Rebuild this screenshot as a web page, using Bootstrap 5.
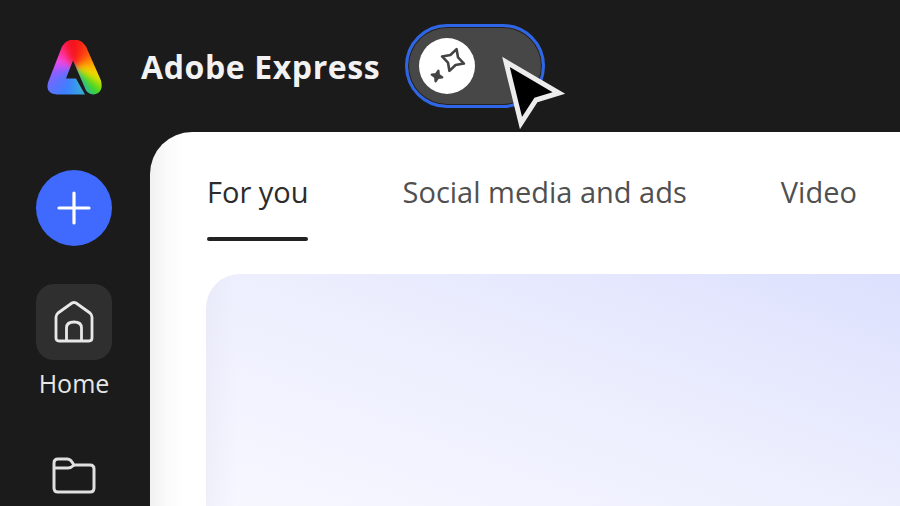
<!DOCTYPE html>
<html><head>
  <title>Adobe Express</title>
  <link rel="stylesheet" href="https://cdn.jsdelivr.net/npm/bootstrap@5.3.0/dist/css/bootstrap.min.css">
  <style>
    html, body { height: 506px; overflow: hidden; }
    body { background: #1b1b1b; font-family: "Open Sans", "Noto Sans", sans-serif; }
    .app-top { height: 132px; padding-left: 47px; }
    .logo-a {
      width: 55px; height: 55px; margin-top: 2px; overflow: hidden;
      clip-path: path("M15 7Q19 0 27 0Q35 0 39 7L54 41Q57 53 47 55Q42 55 39 51L26 21L19 39L29 39L38 55L10 55Q-2 54 1 43Z");
    }
    .logo-fill {
      width: 95px; height: 95px; margin: -20px; filter: blur(3px);
      background: conic-gradient(from 0deg at 50% 50%, #f5101c 0deg, #ff4a10 40deg, #ffb400 85deg, #f5e000 112deg, #30d820 138deg, #3aa8e0 160deg, #3a80ff 200deg, #6a6cff 238deg, #a058ff 262deg, #f848e8 295deg, #ff2a80 325deg, #f5101c 350deg);
    }
    .brand-name { margin-left: 39px; width: 264px; padding-top: 2px; color: #f2f2f2; font-size: 32px; font-weight: 700; letter-spacing: .6px; white-space: nowrap; }
    .mode-toggle { width: 140px; height: 84px; }
    .toggle-track { width: 140px; height: 84px; border: 3px solid #2f66e8; border-radius: 42px; background: #474747; box-shadow: inset 0 0 0 1px #222; padding: 11px; }
    .toggle-knob { width: 56px; height: 56px; background: #fff; border-radius: 50%; }
    .cursor-arrow { position: absolute; left: 95px; top: 28px; }
    .side-rail { width: 150px; height: 374px; flex: none; padding: 38px 2px 0 0; }
    .add-btn { width: 76px; height: 76px; border-radius: 50%; background: #4069fd; border: 0; padding: 0; }
    .add-btn:hover, .add-btn:focus { background: #4069fd; }
    .rail-tile { width: 76px; height: 76px; border-radius: 18px; background: #2f2f2f; margin-top: 38px; }
    .rail-label { color: #e6e6e6; font-size: 25px; margin-top: 5px; line-height: 36px; }
    .rail-folder { margin-top: 56px; }
    .main-panel { height: 374px; background: linear-gradient(90deg, #f1f1f1 0, #fbfbfb 18px, #fff 34px); border-top-left-radius: 42px; padding: 36px 0 0 57px; overflow: hidden; }
    .tab-row { gap: 94px; height: 106px; }
    .tab-item { color: #505050; font-size: 29px; line-height: 48px; white-space: nowrap; padding: 0; }
    .tab-item.on { color: #2c2c2c; position: relative; }
    .tab-item.on::after { content: ""; position: absolute; left: 0; right: 1px; top: 69px; height: 4px; border-radius: 2px; background: #222; }
    .hero-box { height: 232px; margin-left: -1px; border-top-left-radius: 34px; background: linear-gradient(90deg, rgba(225,225,240,.35) 0, rgba(225,225,240,0) 30px), linear-gradient(200deg, #dde0fd 0, #edeffe 50%, #f7f7ff 100%); }
  </style>
</head>
<body>
  <div class="app-top d-flex align-items-center">
    <div class="logo-a flex-shrink-0"><div class="logo-fill"></div></div>
    <div class="brand-name">Adobe Express</div>
    <div class="mode-toggle position-relative">
      <div class="toggle-track">
        <div class="toggle-knob d-flex align-items-center justify-content-center">
          <svg width="44" height="44" viewBox="0 0 44 44" fill="none" stroke="#444" stroke-width="2.6" stroke-linejoin="round">
            <path transform="translate(28 16) rotate(18)" d="M0 -11.500L4 -4L11.500 0L4 4L0 11.500L-4 4L-11.500 0L-4 -4Z"/>
            <path transform="translate(12 32) rotate(15)" d="M0 -5.500L1.500 -1.500L5.500 0L1.500 1.500L0 5.500L-1.500 1.500L-5.500 0L-1.500 -1.500Z" fill="#444" stroke-width="2.200"/>
          </svg>
        </div>
      </div>
      <svg class="cursor-arrow" width="68" height="78" viewBox="0 0 68 78">
        <path d="M6 10L59 41L36 48L21 71Z" fill="#000" stroke="#ececec" stroke-width="5" stroke-linejoin="miter"/>
      </svg>
    </div>
  </div>
  <div class="d-flex">
    <div class="side-rail d-flex flex-column align-items-center">
      <button class="btn add-btn d-flex align-items-center justify-content-center" type="button">
        <svg width="34" height="34" viewBox="0 0 34 34" stroke="#fff" stroke-width="3.2" stroke-linecap="round"><path d="M17 2V32M2 17H32"/></svg>
      </button>
      <div class="rail-tile d-flex align-items-center justify-content-center">
        <svg width="40" height="44" viewBox="0 0 40 44" fill="none" stroke="#e8e8e8" stroke-width="2.8" stroke-linejoin="round"><path d="M2 17Q2 15 4 13L18 3Q20 2 22 3L36 13Q38 15 38 17V38Q38 41 35 41H5Q2 41 2 38Z"/><path d="M12.500 41V28Q12.500 22 20 22Q27.500 22 27.500 28V41"/></svg>
      </div>
      <div class="rail-label">Home</div>
      <div class="rail-folder">
        <svg width="44" height="37" viewBox="0 0 44 37" fill="none" stroke="#e0e0e0" stroke-width="3" stroke-linejoin="round"><path d="M2 6Q2 2 6 2H15Q18 2 20 5L22 8H38Q42 8 42 12V31Q42 35 38 35H6Q2 35 2 31Z"/><path d="M2 11H16Q19 11 22 8"/></svg>
      </div>
    </div>
    <div class="main-panel flex-grow-1">
      <div class="tab-row d-flex">
        <div class="tab-item on">For you</div>
        <div class="tab-item">Social media and ads</div>
        <div class="tab-item">Video</div>
      </div>
      <div class="hero-box"></div>
    </div>
  </div>
  <script src="https://cdn.jsdelivr.net/npm/bootstrap@5.3.0/dist/js/bootstrap.bundle.min.js"></script>
</body></html>
